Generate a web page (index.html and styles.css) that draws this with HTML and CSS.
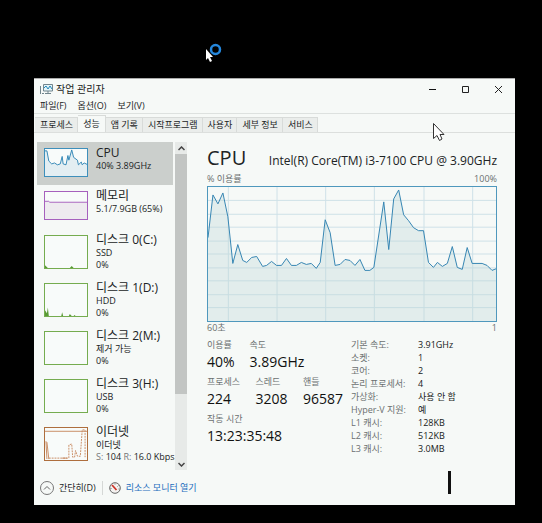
FILE: index.html
```html
<!DOCTYPE html>
<html lang="ko">
<head>
<meta charset="utf-8">
<title>작업 관리자</title>
<link rel="stylesheet" href="styles.css">
</head>
<body>
<main class="window">
  <header class="titlebar">
    <svg class="app-icon" width="13" height="12" viewBox="0 0 13 12" fill="none">
      <path d="M3.5 1.500h9v6.500h-9z" fill="#e2f3f8" stroke="#71858d"/>
      <path d="M4 5l2-2 2 3 2-3 2 3" stroke="#2488b8"/>
      <path d="M8 8v2M5 10.500h6M.500 3v8M2 10.500h2" stroke="#71858d"/>
    </svg>
    <h1 class="window-title">작업 관리자</h1>
    <div class="window-buttons">
      <button type="button" aria-label="최소화"><svg width="9" height="9" viewBox="0 0 9 9"><path d="M1 4.500h7" stroke="#111"/></svg></button>
      <button type="button" aria-label="최대화"><svg width="9" height="9" viewBox="0 0 9 9"><path d="M1.500 1.500h6v6h-6z" fill="none" stroke="#222"/></svg></button>
      <button type="button" aria-label="닫기"><svg width="9" height="9" viewBox="0 0 9 9"><path d="M1 1l7 7M8 1L1 8" stroke="#222"/></svg></button>
    </div>
  </header>
  <nav class="menu">
    <button type="button">파일(F)</button>
    <button type="button">옵션(O)</button>
    <button type="button">보기(V)</button>
  </nav>
  <div class="tabs" role="tablist">
    <button type="button" role="tab">프로세스</button>
    <button type="button" role="tab" class="active" aria-selected="true">성능</button>
    <button type="button" role="tab">앱 기록</button>
    <button type="button" role="tab">시작프로그램</button>
    <button type="button" role="tab">사용자</button>
    <button type="button" role="tab">세부 정보</button>
    <button type="button" role="tab">서비스</button>
  </div>
  <div class="content">
    <aside class="sidebar">
      <div class="devices">
        <button type="button" class="device short selected">
          <svg class="thumb cpu" viewBox="0 0 44 29" preserveAspectRatio="none"><path class="area" d="M-1 30V2H2L4 13 7 16 10 15 13 17 16 16 18 8 19 16 22 17 24 7 25 12 28 1 30 9 34 12 35 17 38 14 39 17 41 15 45 17V30z"/></svg>
          <span class="device-text"><b>CPU</b><span>40% 3.89GHz</span></span>
        </button>
        <button type="button" class="device short">
          <svg class="thumb memory" viewBox="0 0 44 29" preserveAspectRatio="none"><path class="area" d="M-1 30V10H4L5 11H45V30z"/></svg>
          <span class="device-text"><b>메모리</b><span>5.1/7.9GB (65%)</span></span>
        </button>
        <button type="button" class="device">
          <svg class="thumb disk" viewBox="0 0 44 34" preserveAspectRatio="none"><path class="area" d="M0 34V31L3 34zM26 34L28 32 30 34z"/></svg>
          <span class="device-text"><b>디스크 0(C:)</b><span>SSD</span><span>0%</span></span>
        </button>
        <button type="button" class="device">
          <svg class="thumb disk" viewBox="0 0 44 34" preserveAspectRatio="none"><path class="area" d="M0 34V28L2 31 3 25 4 34zM17 34L18 30 19 34zM25 34L26 32 28 34zM30 34l1-1 1 1z"/></svg>
          <span class="device-text"><b>디스크 1(D:)</b><span>HDD</span><span>0%</span></span>
        </button>
        <button type="button" class="device">
          <svg class="thumb disk" viewBox="0 0 44 34"></svg>
          <span class="device-text"><b>디스크 2(M:)</b><span>제거 가능</span><span>0%</span></span>
        </button>
        <button type="button" class="device">
          <svg class="thumb disk" viewBox="0 0 44 34"></svg>
          <span class="device-text"><b>디스크 3(H:)</b><span>USB</span><span>0%</span></span>
        </button>
        <button type="button" class="device">
          <svg class="thumb network" viewBox="0 0 44 34" preserveAspectRatio="none"><path d="M0 3.500h44"/><path d="M1 14L2 33M2 15L4 33M18 32h5"/><path d="M4 32H25V18L28 17 29 31H31L32 24 34 30H37L39 2H42V31" stroke-dasharray="2 1"/></svg>
          <span class="device-text"><b>이더넷</b><span>이더넷</span><span><i>S:</i> 104 <i>R:</i> 16.0 Kbps</span></span>
        </button>
      </div>
      <div class="scrollbar">
        <button type="button" aria-label="위로"><svg width="7" height="5" viewBox="0 0 7 5"><path d="M.500 4l3-3 3 3" fill="none" stroke="#444" stroke-width="1.500"/></svg></button>
        <div class="track"><div class="thumb-bar"></div></div>
        <button type="button" aria-label="아래로"><svg width="7" height="5" viewBox="0 0 7 5"><path d="M.500 1l3 3 3-3" fill="none" stroke="#444" stroke-width="1.500"/></svg></button>
      </div>
    </aside>
    <section class="detail">
      <div class="heading"><h2>CPU</h2><span>Intel(R) Core(TM) i3-7100 CPU @ 3.90GHz</span></div>
      <div class="axis top"><span>% 이용률</span><span>100%</span></div>
      <svg class="graph" viewBox="0 0 290 135" preserveAspectRatio="none">
        <path class="grid" d="M0 13.500h290M0 27.500h290M0 40.500h290M0 54.500h290M0 67.500h290M0 81.500h290M0 94.500h290M0 108.500h290M0 121.500h290M20.500 0v135M69.500 0v135M118.500 0v135M167.500 0v135M217.500 0v135M266.500 0v135"/>
        <path class="usage" d="M-1 136V51H0L5 8l5 9 5-11 5 24 5 47 5-19 5 16 4 2 5-5 5-1 6 10 4-1 5-4 5 4h5l5-7 5 7h5l5-3 5 2 5-1 5 5 4-6 5-43 5 13 5 33 5-1 5-5 5 1 5 5 5-6 5 11h5L167 81 177 15 182 63 187 12 192 3 197 28 202 34 207 41 212 44H217L222 76 227 81 231 76 236 80 241 77 246 60 251 81 256 83 261 61 266 77H276L281 79 286 84 291 82V136z"/>
      </svg>
      <div class="axis bottom"><span>60초</span><span>1</span></div>
      <div class="stats">
        <div class="live">
          <dl class="pair"><div><dt>이용률</dt><dd>40%</dd></div><div><dt>속도</dt><dd>3.89GHz</dd></div></dl>
          <dl class="counts"><div><dt>프로세스</dt><dd>224</dd></div><div><dt>스레드</dt><dd>3208</dd></div><div><dt>핸들</dt><dd>96587</dd></div></dl>
          <dl><div><dt>작동 시간</dt><dd>13:23:35:48</dd></div></dl>
        </div>
        <dl class="facts">
          <dt>기본 속도:</dt><dd>3.91GHz</dd>
          <dt>소켓:</dt><dd>1</dd>
          <dt>코어:</dt><dd>2</dd>
          <dt>논리 프로세서:</dt><dd>4</dd>
          <dt>가상화:</dt><dd>사용 안 함</dd>
          <dt>Hyper-V 지원:</dt><dd>예</dd>
          <dt>L1 캐시:</dt><dd>128KB</dd>
          <dt>L2 캐시:</dt><dd>512KB</dd>
          <dt>L3 캐시:</dt><dd>3.0MB</dd>
        </dl>
      </div>
    </section>
  </div>
  <footer class="footer">
    <button type="button"><svg width="14" height="14" viewBox="0 0 14 14" fill="none"><circle cx="7" cy="7" r="6.500" stroke="#777"/><path d="M4 8.500l3-3 3 3" stroke="#666"/></svg><span>간단히(D)</span></button>
    <a href="#"><svg width="12" height="12" viewBox="0 0 12 12"><circle cx="6" cy="6" r="5.300" fill="#f4f3f1" stroke="#666"/><path d="M3 3l4.500 5" stroke="#cb3328" stroke-width="1.800"/><path d="M6 1.500v1M9.500 3.500l-1 1M1.500 6.500h1M9.500 7h1" stroke="#777"/></svg><span>리소스 모니터 열기</span></a>
  </footer>
</main>
<svg class="overlay busy" width="18" height="20" viewBox="0 0 18 20"><circle cx="10.500" cy="6.500" r="4.500" fill="none" stroke="#2587dc" stroke-width="2.500"/><path d="M1 6v11l2-2 2 4 2-1-2-4h3z" fill="#fff"/></svg>
<svg class="overlay pointer" width="13" height="19" viewBox="0 0 13 19"><path d="M1.500 1.500v15l3.500-3 2.500 5 2.500-1.500-2-4.500h4z" fill="#fff" stroke="#333"/></svg>
<div class="overlay caret"></div>
</body>
</html>
```
FILE: styles.css
```css
* { box-sizing: border-box; }
body {
  position: relative;
  margin: 0;
  padding: 78px 27px 17px 34px;
  background: #000;
  color: #202324;
  font: 9px/12px "Open Sans", "Noto Sans CJK KR", sans-serif;
}
button { margin: 0; padding: 0; border: 0; background: none; color: inherit; font: inherit; text-align: left; }
h1, h2, dl, dd { margin: 0; font-weight: 400; }
svg { display: block; flex: none; }
.window { background: #f6f9f7; border-top: 1px solid #aaa; }
.titlebar { display: flex; align-items: center; height: 20px; padding-left: 6px; gap: 3px; }
.window-title { flex: 1; font-size: 10px; }
.window-buttons { display: flex; }
.window-buttons button { display: flex; align-items: center; justify-content: center; width: 33px; height: 20px; }
.menu { display: flex; gap: 11px; height: 15px; padding-left: 6px; border-bottom: 1px solid #dde1df; }
.menu button { line-height: 14px; }
.tabs { display: flex; align-items: flex-end; height: 19px; padding-left: 1px; border-bottom: 1px solid #dcdfdd; }
.tabs button { height: 15px; padding: 0 4px 0 5px; border: 1px solid #d8dbd9; border-left: 0; border-bottom: 0; background: #eaedeb; line-height: 14px; white-space: nowrap; }
.tabs .active { height: 17px; padding: 0 5px; background: #f6f9f7; }
.content { display: flex; padding: 9px 18px 0 3px; gap: 20px; }
.sidebar { display: flex; flex: none; width: 150px; height: 328px; }
.devices { flex: 1; min-width: 0; }
.device { display: flex; gap: 8px; width: 136px; height: 48px; padding: 4px 0 0 7px; }
.device.short { height: 43px; }
.device.short + .device:not(.short) { margin-top: 1px; }
.selected { background: #cbcfcc; }
.thumb { width: 44px; height: 34px; margin-top: 2px; border: 1px solid; fill: none; stroke-width: 1; background: #f8fbfa; }
.short .thumb { height: 29px; }
.cpu { border-color: #3d8fbb; }
.cpu .area { fill: #e3eef2; stroke: #2f85b5; }
.memory { border-color: #a660bd; }
.memory .area { fill: #eeebef; stroke: #a660bd; }
.disk { border-color: #75ac4f; }
.disk .area { fill: #599b34; }
.network { border-color: #ae6e3d; stroke: #c88a60; }
.device-text { display: flex; flex-direction: column; line-height: 12px; white-space: nowrap; }
.device-text b { font-size: 12px; font-weight: 400; line-height: 14px; }
.device-text i { color: #777; font-style: normal; }
.scrollbar { display: flex; flex-direction: column; width: 12px; margin-left: auto; background: #e7eae8; }
.scrollbar button { display: flex; align-items: center; justify-content: center; height: 12px; }
.track { flex: 1; }
.thumb-bar { height: 79%; background: #c2c5c3; }
.detail { flex: 1; min-width: 0; }
.heading { display: flex; justify-content: space-between; align-items: baseline; height: 31px; }
.heading h2 { font-size: 20px; line-height: 32px; }
.heading span { font-size: 12px; white-space: nowrap; }
.axis { display: flex; justify-content: space-between; height: 13px; color: #6b7070; }
.graph { width: 100%; height: 136px; border: 1px solid #4f98bd; }
.grid { fill: none; stroke: #cfe1e8; }
.usage { fill: rgb(190 216 216 / 35%); stroke: #3585b2; }
.stats { display: grid; grid-template-columns: 144px 1fr; padding-top: 3px; }
.live dl { display: flex; height: 37px; }
.live dt { color: #6b7070; line-height: 13px; white-space: nowrap; }
.live dd { color: #111; font-size: 14px; line-height: 22px; }
.pair { gap: 15px; }
.counts { justify-content: space-between; padding-right: 8px; }
.facts { display: grid; grid-template-columns: 67px 1fr; grid-auto-rows: 13px; align-content: start; line-height: 13px; white-space: nowrap; }
.facts dt { color: #6b7070; }
.facts dd { color: #171a1a; }
.footer { display: flex; align-items: center; height: 35px; padding-left: 6px; }
.footer button, .footer a { display: flex; align-items: center; gap: 5px; }
.footer button { padding-right: 6px; border-right: 1px solid #d5d8d6; }
.footer a { padding-left: 6px; color: #1c6dbd; text-decoration: none; }
.overlay { position: absolute; }
.busy { left: 205px; top: 43px; }
.pointer { left: 432px; top: 122px; }
.caret { left: 448px; top: 471px; width: 3px; height: 23px; background: #111; }
```
